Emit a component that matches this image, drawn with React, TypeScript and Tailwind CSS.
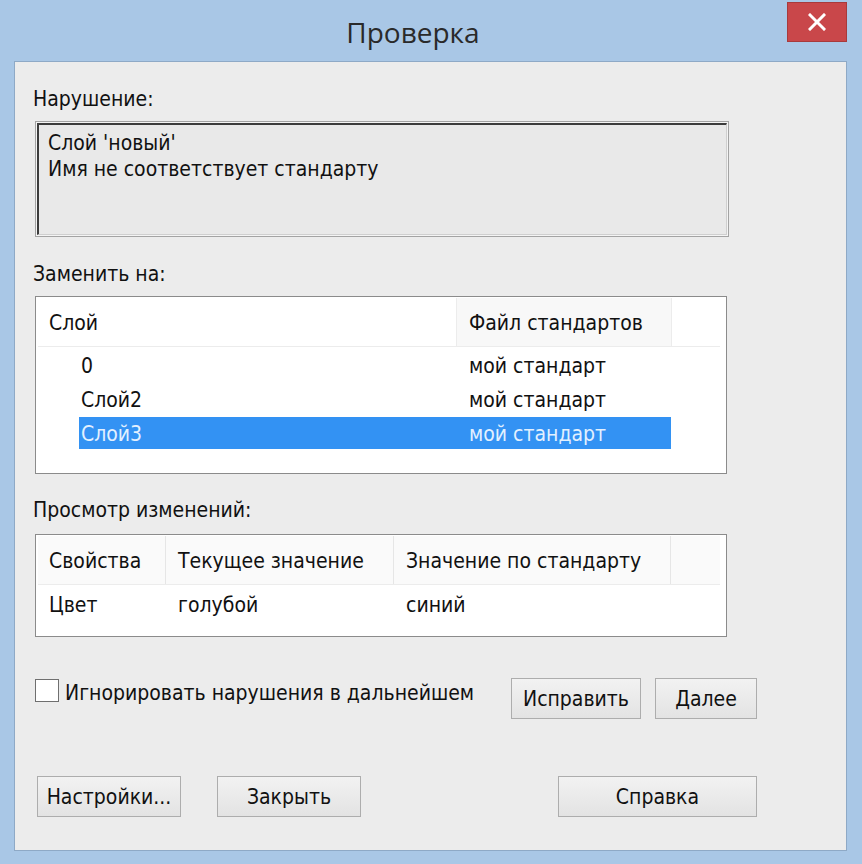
import React from "react";

const F = "font-['DejaVu_Sans_Condensed','DejaVu_Sans',sans-serif] font-stretch-condensed";

function Btn({ label, w }: { label: string; w: string }) {
  return (
    <div
      className={`${w} h-[41px] pt-[3px] flex items-center justify-center border border-[#adadad] bg-gradient-to-b from-[#f2f2f2] to-[#e3e3e3] text-[21px] text-[#111]`}
    >
      {label}
    </div>
  );
}

export default function App() {
  return (
    <div className={`w-[862px] h-[864px] bg-[#a9c7e6] flex flex-col ${F} text-[#111]`}>
      {/* title bar */}
      <div className="relative h-[61px] flex items-center justify-center">
        <span className="font-['Open_Sans',sans-serif] font-stretch-normal text-[28px] text-[#2a2a2a] mt-[2px] ml-[-36px]">Проверка</span>
        <div className="absolute right-[15px] top-[2px] w-[60px] h-[40px] bg-[#c9474a] border border-[#a83a3c] flex items-center justify-center">
          <svg width="18" height="18" viewBox="0 0 18 18">
            <path d="M2 2 L16 16 M16 2 L2 16" stroke="#fff" strokeWidth="3" strokeLinecap="square" />
          </svg>
        </div>
      </div>

      {/* client area */}
      <div className="ml-[14px] mr-[15px] mb-[13px] flex-1 border border-[#8ea9c6] bg-[#ececec] pl-[18px] pt-[22px] flex flex-col">
        <div className="h-[26px] leading-[30px] text-[21px]">Нарушение:</div>

        {/* violation box */}
        <div className="mt-[11px] ml-[2px] w-[694px] h-[116px] border border-[#a3a3a3] bg-[#f4f4f4] p-[1px]">
          <div className="h-full border-t-2 border-l-2 border-[#3c3c3c] border-r border-b border-r-[#cfcfcf] border-b-[#cfcfcf] bg-[#e9e9e9] pl-[9px] pt-[5px] text-[21px] leading-[26px]">
            <div>Слой 'новый'</div>
            <div>Имя не соответствует стандарту</div>
          </div>
        </div>

        <div className="mt-[22px] h-[26px] leading-[30px] text-[21px]">Заменить на:</div>

        {/* list 1 */}
        <div className="mt-[11px] ml-[2px] w-[692px] h-[178px] border border-[#8b8b8b] bg-white pl-[2px] pr-[6px] pt-[1px] text-[21px]">
          <div className="h-[49px] flex border-b border-[#ececec]">
            <div className="w-[418px] pl-[11px] pt-[3px] flex items-center">Слой</div>
            <div className="w-[216px] pl-[12px] pt-[3px] flex items-center border-l border-r border-[#ececec] bg-[#f8f8f8]">Файл стандартов</div>
            <div className="flex-1"></div>
          </div>
          <div className="pt-[1px] pl-[41px]">
            {[
              ["0", false],
              ["Слой2", false],
              ["Слой3", true],
            ].map(([a, sel], i) => (
              <div key={i} className="h-[34px] py-[1px]">
                <div
                  className={`w-[592px] h-[32px] pt-[3px] flex items-center ${
                    sel ? "bg-[#3392f3] text-[#e2f0ff]" : ""
                  }`}
                >
                  <div className="w-[390px] pl-[2px]">{a as string}</div>
                  <div>мой стандарт</div>
                </div>
              </div>
            ))}
          </div>
        </div>

        <div className="mt-[21px] h-[26px] leading-[30px] text-[21px]">Просмотр изменений:</div>

        {/* table 2 */}
        <div className="mt-[13px] ml-[2px] w-[692px] h-[103px] border border-[#8b8b8b] bg-white pl-[2px] pr-[6px] pt-[1px] text-[21px]">
          <div className="h-[49px] flex border-b border-[#ececec] bg-[#fafafa]">
            <div className="w-[127px] pl-[11px] pt-[3px] flex items-center">Свойства</div>
            <div className="w-[228px] pl-[12px] pt-[3px] flex items-center border-l border-[#e6e6e6]">Текущее значение</div>
            <div className="w-[278px] pl-[12px] pt-[3px] flex items-center border-l border-r border-[#e6e6e6]">Значение по стандарту</div>
            <div className="flex-1"></div>
          </div>
          <div className="h-[38px] pt-[3px] flex items-center">
            <div className="w-[127px] pl-[11px]">Цвет</div>
            <div className="w-[228px] pl-[13px]">голубой</div>
            <div className="pl-[13px]">синий</div>
          </div>
        </div>

        {/* checkbox row */}
        <div className="mt-[41px] ml-[2px] w-[722px] flex items-start">
          <div className="mt-[1px] w-[24px] h-[23px] border border-[#6f6f6f] bg-white"></div>
          <div className="ml-[6px] h-[26px] leading-[30px] text-[21px]">Игнорировать нарушения в дальнейшем</div>
          <div className="ml-auto flex gap-[14px]">
            <Btn label="Исправить" w="w-[130px]" />
            <Btn label="Далее" w="w-[102px]" />
          </div>
        </div>

        {/* bottom row */}
        <div className="mt-[57px] ml-[2px] w-[722px] flex">
          <div className="ml-[2px] flex gap-[36px]">
            <Btn label="Настройки..." w="w-[144px]" />
            <Btn label="Закрыть" w="w-[144px]" />
          </div>
          <div className="ml-auto">
            <Btn label="Справка" w="w-[199px]" />
          </div>
        </div>
      </div>
    </div>
  );
}
